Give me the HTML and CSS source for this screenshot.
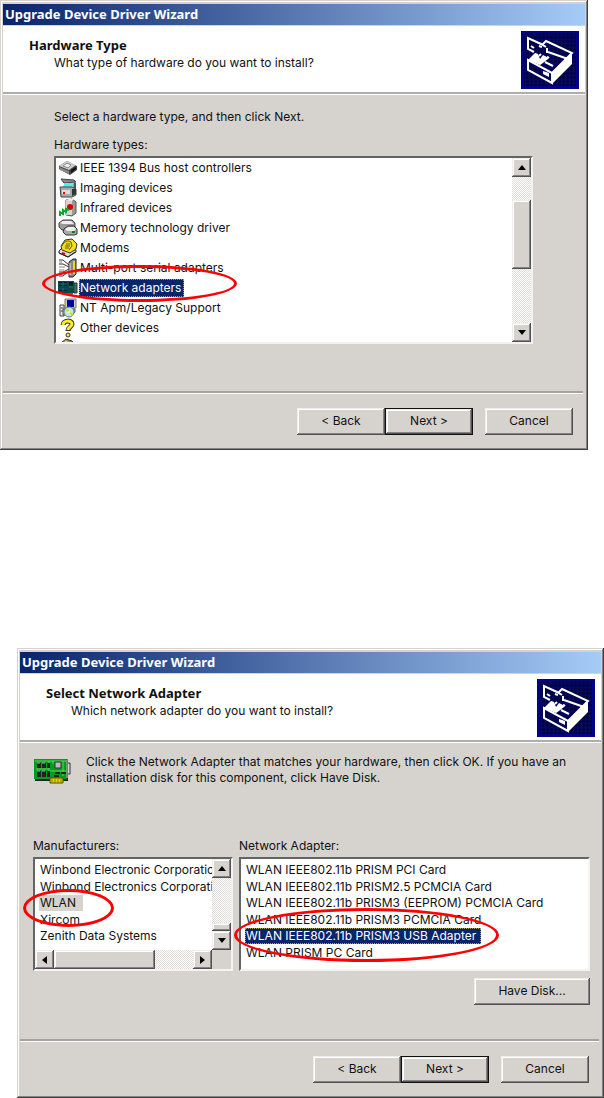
FILE: index.html
```html
<!DOCTYPE html>
<html lang="en">
<head>
<meta charset="utf-8">
<title>Upgrade Device Driver Wizard</title>
<link rel="stylesheet" href="styles.css">
</head>
<body>
<svg class="defs" aria-hidden="true">
  <defs>
    <pattern id="weave" width="4" height="4" patternUnits="userSpaceOnUse">
      <rect width="4" height="4" fill="#00004c"/>
      <path d="M0 .5H4M.5 0V4" stroke="#00008c"/>
      <path d="M2 2h1v1h-1z" fill="#000010"/>
    </pattern>
    <symbol id="drawer" viewBox="0 0 58 58">
      <rect width="58" height="58" fill="#00008c"/>
      <rect x="3" y="3" width="52" height="52" fill="url(#weave)"/>
      <path d="M7 29 14 22 22 23 28 26 19 34Z" fill="#fff"/>
      <path d="M31 42 51 22V33L32 52Z" fill="#fff"/>
      <path d="M21 14 25 10 51 22 31 42 7 29V39L31 52V42M27 21 47 28M19 33 28 26" fill="none" stroke="#fff" stroke-width="2"/>
      <path d="M7 7 20 13 26 17V26L22 24 19 28 17 23 7 18Z" fill="#00004c"/>
      <path d="M13 21 7 18V7L20 13 25 16" fill="none" stroke="#fff" stroke-width="2"/>
      <path d="m10 15 3 2m5-2 3 1m5 1v5m-8 3 2-2m3 5 1-2M24 31l8 4" stroke="#fff" stroke-width="2"/>
      <path d="m22 40 6 2v4l-6-3z" fill="#fff"/>
    </symbol>
  </defs>
</svg>

<main class="page">
  <section class="wizard wizard-first" aria-label="Hardware Type">
    <div class="titlebar">Upgrade Device Driver Wizard</div>
    <header class="banner">
      <div>
        <h1 class="heading">Hardware Type</h1>
        <p class="subheading">What type of hardware do you want to install?</p>
      </div>
      <svg class="emblem" aria-hidden="true"><use href="#drawer"/></svg>
    </header>
    <div class="content content-types">
      <p class="prompt">Select a hardware type, and then click Next.</p>
      <div class="caption" id="types-label">Hardware types:</div>
      <div class="listbox types-box">
        <ul class="types" role="listbox" aria-labelledby="types-label" tabindex="0">
          <li role="option"><svg class="icon" viewBox="0 0 20 20"><path d="M1 8 9 3l10 5v4l-7 5L1 11z" fill="#444"/><path d="M1 8 9 3l9 4-7 5z" fill="#ccc"/><path d="m1 9 10 4v3L2 12z" fill="#888"/><path d="m5 8 4-3 4 2-3 3z" fill="#eee" stroke="#888"/><path d="m13 12 5-3v2l-5 4z" fill="#111"/></svg><span>IEEE 1394 Bus host controllers</span></li>
          <li role="option"><svg class="icon" viewBox="0 0 20 20"><path d="m3 1 13 1 2 2-12 1z" fill="#888" stroke="#444"/><path d="M7 5h10l-3 5H4z" fill="#5ee"/><path d="m16 4 2 1v7h-3z" fill="#555"/><path d="M2 9h12l4 2v6l-4 2H3z" fill="#aaa" stroke="#444"/><path d="M4 12h8v4H4z" fill="#ddd"/><path d="M5 14h2v2H5z" fill="#e00"/><path d="M14 11v7l4-2v-5z" fill="#333"/></svg><span>Imaging devices</span></li>
          <li role="option"><svg class="icon" viewBox="0 0 20 20"><path d="m8 2 6-1 4 3v11l-4 3-6-1z" fill="#999" stroke="#555"/><path d="M8 2h6v15H8z" fill="#d4d4d4"/><path d="m8 2 3-1h5l-2 2z" fill="#eee"/><circle cx="12" cy="9" r="3" fill="#d00"/><path d="M2 18v-4l3 2v-4l3 2v-3l3 1" fill="none" stroke="#0a2" stroke-width="2"/></svg><span>Infrared devices</span></li>
          <li role="option"><svg class="icon" viewBox="0 0 20 20"><path d="m1 5 4-3h9l3 3v6l-3 1H4l-3-3z" fill="#999" stroke="#444"/><path d="m2 5 3-2h8l3 3H5z" fill="#eee"/><path d="m6 11 4-3h6l3 3v5l-3 1H8l-3-3z" fill="#aaa" stroke="#333"/><path d="m7 11 3-2h6l2 2-2 2H9z" fill="#eee"/><path d="M14 14h3" stroke="#080" stroke-width="2"/></svg><span>Memory technology driver</span></li>
          <li role="option"><svg class="icon" viewBox="0 0 20 20"><path d="m1 13 3-3 14 2v2l-8 5-9-4z" fill="#ddd" stroke="#222"/><path d="m1 15 9 4 7-5" fill="none" stroke="#222"/><path d="m3 8 4-6 7-1 5 5-1 5-6 4-8-3z" fill="#f2e020" stroke="#333"/><path d="M4 8c2-5 6-6 9-4l1 4-3 4" fill="none" stroke="#665c00"/><path d="M7 8h5M8 6h4M7 10h4" stroke="#665c00"/><path d="m4 15 3 1" stroke="#c00" stroke-width="2"/></svg><span>Modems</span></li>
          <li role="option"><svg class="icon" viewBox="0 0 20 20"><path d="M1 2h4l6 5M1 18h4l6-5M1 6h4l6 3M1 14h4l6-3" fill="none" stroke="#333"/><path d="M1 4h3M1 9h6M1 12h5M1 16h3" stroke="#888"/><path d="m11 4 4-3h3v15l-3 3h-4z" fill="#888" stroke="#222"/><path d="M15 3h2v13h-2z" fill="#e8e000"/><path d="M12 5v12" stroke="#ddd"/></svg><span>Multi-port serial adapters</span></li>
          <li role="option" aria-selected="true"><svg class="icon" viewBox="0 0 20 20"><path d="M0 3h16v12H0z" fill="#084848"/><path d="M1 4h3v4H1zm5 0h3v4H6zM1 10h3v3H1zm5 0h3v3H6zM11 4h4v4h-4z" fill="#071c30"/><path d="M1 6h8M1 11h8M11 9h4" stroke="#158078"/><path d="M16 5h3v10h-3z" fill="#426c68" stroke="#213c38"/><path d="M8 15h7v2H8z" fill="#756d25"/></svg><span class="selected">Network adapters</span></li>
          <li role="option"><svg class="icon" viewBox="0 0 20 20"><path d="M7 1h11v9H7z" fill="#ccc" stroke="#777"/><path d="M9 2h7v7H9z" fill="#0000a0"/><path d="M2 7h4v11H2z" fill="#eee" stroke="#444"/><path d="M3 10h2M3 13h2" stroke="#333"/><path d="M5 11h12v3l-3 3H5z" fill="#bbb" stroke="#555"/><circle cx="11" cy="14" r="5" fill="#b5eef0" stroke="#678"/><path d="m11 14-3-3m3 3 4 3" stroke="#dd0" stroke-width="2"/><circle cx="11" cy="14" r="1" fill="#fff"/></svg><span>NT Apm/Legacy Support</span></li>
          <li role="option"><svg class="icon" viewBox="0 0 20 20"><path d="M5 7c0-5 9-5 9-1 0 3-4 3-4 7" fill="none" stroke="#333" stroke-width="5"/><path d="M5 7c0-5 9-5 9-1 0 3-4 3-4 6" fill="none" stroke="#ffec20" stroke-width="3"/><circle cx="10" cy="17" r="2" fill="#ffec20" stroke="#333"/></svg><span>Other devices</span></li>
          <li role="option" aria-label="Ports"><svg class="icon" viewBox="0 0 20 20"><path d="m3 5 5-4 6 2 4 5-5 8H3z" fill="#a0943c" stroke="#333"/><path d="m7 3 4 2" stroke="#eee"/></svg></li>
        </ul>
        <div class="vscroll">
          <button class="arrow" type="button" aria-label="Scroll up"><svg viewBox="0 0 8 5"><path d="M0 5 4 0l4 5z"/></svg></button>
          <div class="track types-track"><div class="thumb"></div></div>
          <button class="arrow" type="button" aria-label="Scroll down"><svg viewBox="0 0 8 5"><path d="m0 0 4 5 4-5z"/></svg></button>
        </div>
        <div class="mark mark-network"></div>
      </div>
    </div>
    <footer class="actions">
      <button class="btn" type="button">&lt; Back</button>
      <button class="btn default" type="button">Next &gt;</button>
      <button class="btn cancel" type="button">Cancel</button>
    </footer>
  </section>

  <section class="wizard wizard-second" aria-label="Select Network Adapter">
    <div class="titlebar">Upgrade Device Driver Wizard</div>
    <header class="banner">
      <div>
        <h1 class="heading">Select Network Adapter</h1>
        <p class="subheading">Which network adapter do you want to install?</p>
      </div>
      <svg class="emblem" aria-hidden="true"><use href="#drawer"/></svg>
    </header>
    <div class="content content-adapter">
      <div class="intro">
        <svg class="card" viewBox="0 0 38 28" aria-hidden="true">
          <path d="M1 2h34v21H2z" fill="#222"/><path d="M1 1h33v20H1z" fill="#079b20"/>
          <path d="M2 3h31M2 11h14M17 13h16M16 3v15M20 3v3M30 3v15" stroke="#54d85b" fill="none"/>
          <path d="M4 5h4v5H4zm5 0h4v5H9zm5 0h3v5h-3zM4 13h4v6H4zm5 0h4v6H9zm5 0h3v6h-3zM22 14h5v2h-5zm6 0h5v2h-5zM21 17h5v2h-5z" fill="#222"/>
          <path d="M4 5h3m2 0h3M4 13h3m2 0h3" stroke="#aaa"/>
          <path d="M22 4h6v6h-6z" fill="#bbb" stroke="#333"/>
          <path d="M2 4h1v2H2zm0 6h1v2H2zm0 5h1v2H2z" fill="#e22"/>
          <path d="M17 20h13v5H17z" fill="#e8d800" stroke="#554c00"/><path d="M19 21v4m3-4v4m3-4v4m3-4v4" stroke="#887900"/>
          <path d="M34 1v21M35 5h2v11h-2" fill="none" stroke="#333"/><path d="M34 2v18" stroke="#ccc"/>
        </svg>
        <p>Click the Network Adapter that matches your hardware, then click OK. If you have an installation disk for this component, click Have Disk.</p>
      </div>
      <div class="columns">
        <div class="column">
          <div class="caption" id="maker-label">Manufacturers:</div>
          <div class="listbox makers-box">
            <ul class="rows makers" role="listbox" aria-labelledby="maker-label" tabindex="0">
              <li role="option">Winbond Electronic Corporation</li>
              <li role="option">Winbond Electronics Corporation</li>
              <li role="option" aria-selected="true"><span class="inactive">WLAN</span></li>
              <li role="option">Xircom</li>
              <li role="option">Zenith Data Systems</li>
            </ul>
            <div class="vscroll">
              <button class="arrow" type="button" aria-label="Scroll up"><svg viewBox="0 0 8 5"><path d="M0 5 4 0l4 5z"/></svg></button>
              <div class="track makers-track"><div class="thumb"></div></div>
              <button class="arrow" type="button" aria-label="Scroll down"><svg viewBox="0 0 8 5"><path d="m0 0 4 5 4-5z"/></svg></button>
            </div>
            <div class="hscroll">
              <button class="arrow" type="button" aria-label="Scroll left"><svg class="side" viewBox="0 0 5 8"><path d="M5 0 0 4l5 4z"/></svg></button>
              <div class="track"><div class="thumb"></div></div>
              <button class="arrow" type="button" aria-label="Scroll right"><svg class="side" viewBox="0 0 5 8"><path d="m0 0 5 4-5 4z"/></svg></button>
            </div>
            <div class="mark mark-wlan"></div>
          </div>
        </div>
        <div class="column">
          <div class="caption" id="model-label">Network Adapter:</div>
          <div class="listbox models-box">
            <ul class="rows" role="listbox" aria-labelledby="model-label" tabindex="0">
              <li role="option">WLAN IEEE802.11b PRISM PCI Card</li>
              <li role="option">WLAN IEEE802.11b PRISM2.5 PCMCIA Card</li>
              <li role="option">WLAN IEEE802.11b PRISM3 (EEPROM) PCMCIA Card</li>
              <li role="option">WLAN IEEE802.11b PRISM3 PCMCIA Card</li>
              <li role="option" aria-selected="true"><span class="selected">WLAN IEEE802.11b PRISM3 USB Adapter</span></li>
              <li role="option">WLAN PRISM PC Card</li>
            </ul>
            <div class="mark mark-usb"></div>
          </div>
        </div>
      </div>
      <button class="btn disk" type="button">Have Disk...</button>
    </div>
    <footer class="actions">
      <button class="btn" type="button">&lt; Back</button>
      <button class="btn default" type="button">Next &gt;</button>
      <button class="btn cancel" type="button">Cancel</button>
    </footer>
  </section>
</main>
</body>
</html>
```
FILE: styles.css
```css
* { box-sizing: border-box; }
body {
  margin: 0;
  background: #fff;
  color: #111;
  font: 12px/16px Inter, "Liberation Sans", sans-serif;
}
h1, p, ul { margin: 0; padding: 0; }
ul { list-style: none; }
button { font: inherit; color: inherit; }
.defs { position: absolute; width: 0; height: 0; }

.page { display: flex; flex-direction: column; gap: 198px; }
.wizard {
  display: flex;
  flex-direction: column;
  padding: 4px 3px 3px;
  background: #d6d3ce;
  box-shadow: inset -1px -1px #404040, inset 1px 1px #d6d3ce, inset -2px -2px #848284, inset 2px 2px #fff;
}
.wizard-first { margin-right: 16px; }
.wizard-second { margin-left: 17px; }

.titlebar {
  height: 21px;
  padding-left: 2px;
  background: linear-gradient(90deg, #08246b, #a5cbf7);
  color: #fff;
  font: bold 13px/20px "Noto Sans", sans-serif;
}
.banner {
  display: flex;
  justify-content: space-between;
  margin-top: 1px;
  padding: 5px 6px 3px 26px;
  background: #fff;
  border-bottom: 2px solid #adadad;
}
.heading {
  padding-top: 5px;
  font: bold 13px/18px "Noto Sans", sans-serif;
}
.subheading { padding-left: 25px; line-height: 18px; }
.emblem { width: 58px; height: 58px; flex: none; }

.content { border-top: 1px solid #fff; }
.content-types { padding: 14px 52px 47px 51px; }
.prompt { margin-bottom: 12px; }
.caption { margin-bottom: 3px; }

.listbox {
  position: relative;
  display: grid;
  grid-template-columns: minmax(0, 1fr) 19px;
  background: #fff;
  border: 2px solid #636563;
  border-right-color: #f4f3f1;
  border-bottom-color: #f4f3f1;
}
.types-box { height: 188px; }
.types { overflow: hidden; padding-left: 2px; }
.types li { display: flex; align-items: center; gap: 1px; height: 20px; }
.types span { padding: 0 1px; line-height: 18px; }
.icon { width: 20px; height: 20px; flex: none; }
.types .selected { padding-right: 3px; }
.selected {
  background: #08246b;
  color: #fff;
  outline: 1px dotted #a5a05f;
  outline-offset: -1px;
}

.vscroll { display: flex; flex-direction: column; min-height: 0; }
.hscroll { display: flex; }
.arrow {
  display: grid;
  place-items: center;
  flex: none;
  width: 19px;
  height: 19px;
  padding: 0;
}
.arrow svg { width: 8px; height: 5px; }
.arrow .side { width: 5px; height: 8px; }
.arrow, .thumb, .btn {
  background: #d6d3ce;
  border: 0;
  box-shadow: inset -1px -1px #525052, inset 1px 1px #efeeec, inset -2px -2px #848284, inset 2px 2px #fff;
}
.track { flex: 1; background: repeating-conic-gradient(#fff 0 25%, #dedcd8 0 50%) 0 0 / 2px 2px; }
.types-track { padding-top: 23px; }
.types-track .thumb { height: 69px; }

.actions {
  display: flex;
  justify-content: flex-end;
  margin-right: 2px;
  padding: 15px 10px 12px;
  border-top: 2px solid #a5a3a0;
  box-shadow: inset 0 1px #fff;
}
.btn { width: 88px; height: 27px; padding: 0 0 2px; }
.default {
  border: 1px solid #111;
}
.cancel { margin-left: 12px; }

.content-adapter { padding: 11px 11px 34px 13px; }
.intro { display: flex; gap: 15px; }
.intro p { max-width: 496px; }
.card { width: 38px; height: 28px; margin-top: 4px; flex: none; }
.columns {
  display: grid;
  grid-template-columns: 200fr 351fr;
  gap: 6px;
  margin-top: 52px;
}
.column { min-width: 0; }
.rows {
  display: grid;
  align-content: space-between;
  min-width: 0;
  overflow: hidden;
  white-space: nowrap;
}
.rows li { padding-left: 5px; }
.rows span { display: inline-block; margin-left: -1px; padding: 0 1px; }
.rows .selected { padding-right: 5px; }
.rows .inactive { padding-right: 7px; background: #d6d3ce; }
.makers-box, .models-box { height: 114px; }
.makers-box { grid-template-rows: 91px 19px; background: linear-gradient(#d6d3ce, #d6d3ce) right bottom / 19px 19px no-repeat #fff; }
.makers { padding: 3px 0 6px; }
.makers-track { display: flex; flex-direction: column; justify-content: flex-end; }
.makers-track .thumb { height: 8px; }
.hscroll .thumb { width: 73%; height: 19px; }
.models-box { grid-template-columns: minmax(0, 1fr); }
.models-box .rows { padding: 3px 0 8px; }
.disk { display: block; width: 116px; margin: 7px 0 0 auto; }

.mark {
  position: absolute;
  border: 3px solid #f00;
  border-radius: 50%;
  pointer-events: none;
}
.mark-network { left: -14px; top: 107px; width: 195px; height: 37px; }
.mark-wlan { left: -12px; top: 30px; width: 91px; height: 38px; }
.mark-usb { left: -7px; top: 49px; width: 265px; height: 54px; }
```
